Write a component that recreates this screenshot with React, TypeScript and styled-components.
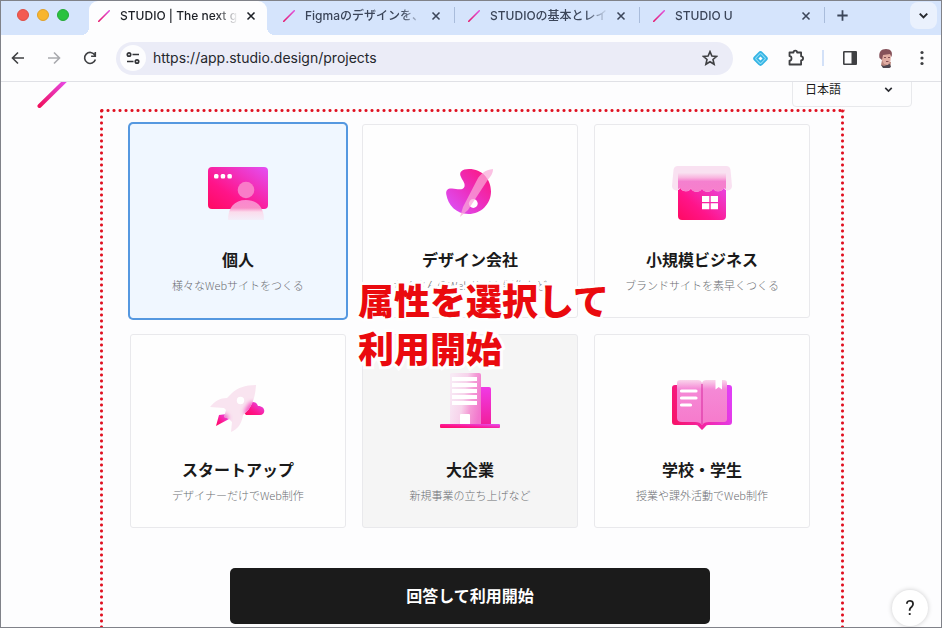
import React, { useState } from "react";
import styled, { createGlobalStyle, css } from "styled-components";

const latin = `Inter, "Noto Sans CJK JP", sans-serif`;
const japanese = `"Noto Sans CJK JP", "Noto Sans", sans-serif`;

const GlobalStyle = createGlobalStyle`
  *, *::before, *::after { box-sizing: border-box; }
  body { margin: 0; background: #fdfdfe; font-family: ${japanese}; color: #1a1a1a; }
  button, input, select { font: inherit; color: inherit; margin: 0; }
  button { padding: 0; border: 0; background: none; cursor: pointer; }
  svg { display: block; }
`;

const Window = styled.div`
  display: flex;
  flex-direction: column;
  height: 100vh;
  border: 1px solid #808289;
  overflow: hidden;
`;

/* ---------- browser chrome ---------- */

const TabStrip = styled.header`
  display: flex;
  flex: none;
  height: 34px;
  background: #d5e4fc;
`;

const WindowButtons = styled.div`
  display: flex;
  flex: none;
  gap: 8px;
  width: 83px;
  padding: 8px 0 0 16px;
`;

const Light = styled.button<{ $color: string; $edge: string }>`
  width: 12px;
  height: 12px;
  border-radius: 50%;
  border: 1px solid ${(p) => p.$edge};
  background: ${(p) => p.$color};
`;

const Tabs = styled.div`
  display: flex;
  flex: 0 1 740px;
  min-width: 0;
`;

const flare = css`
  content: "";
  position: absolute;
  bottom: 0;
  width: 8px;
  height: 8px;
`;

const TabSlot = styled.div<{ $active?: boolean; $divided?: boolean }>`
  position: relative;
  display: flex;
  align-items: center;
  flex: 1 1 185px;
  min-width: 0;
  height: 34px;
  padding: 0 11px 5px 14px;
  color: ${(p) => (p.$active ? "#1d2026" : "#3b4559")};
  background: ${(p) =>
    p.$divided ? "linear-gradient(#a9bcdb, #a9bcdb) 0 6px / 1px 16px no-repeat" : "none"};
  ${(p) =>
    p.$active &&
    css`
      margin: 0 2px 0 5px;
      padding: 0 9px 5px 9px;
      flex-basis: 178px;
      background: #fdfdfe;
      border-radius: 9px 9px 0 0;
      &::before {
        ${flare}
        left: -8px;
        background: radial-gradient(circle at 0 0, transparent 8px, #fdfdfe 8px);
      }
      &::after {
        ${flare}
        right: -8px;
        background: radial-gradient(circle at 100% 0, transparent 8px, #fdfdfe 8px);
      }
    `}
`;

const TabButton = styled.button`
  display: flex;
  align-items: center;
  flex: 1;
  gap: 10px;
  min-width: 0;
  text-align: left;
`;

const TabTitle = styled.span`
  flex: 1;
  overflow: hidden;
  white-space: nowrap;
  font: 500 12px/18px ${latin};
  mask-image: linear-gradient(to right, #000 calc(100% - 28px), transparent calc(100% - 6px));
`;

const IconButton = styled.button<{ $w?: number; $h?: number }>`
  display: grid;
  place-items: center;
  flex: none;
  width: ${(p) => p.$w ?? 24}px;
  height: ${(p) => p.$h ?? 24}px;
`;

const NewTab = styled(IconButton)`
  margin: 2px 0 0 5px;
  color: #3b4559;
`;

const TabSearch = styled(IconButton)`
  margin: 1px 4px 0 auto;
  border-radius: 8px;
  background: #eaf1fd;
`;

const EndDivider = styled.span`
  flex: none;
  width: 1px;
  height: 16px;
  margin-top: 6px;
  background: #a9bcdb;
`;

const Toolbar = styled.nav`
  display: flex;
  align-items: center;
  flex: none;
  height: 47px;
  padding-right: 7px;
  border-bottom: 1px solid #e0e1e6;
  background: #fdfdfe;
  color: #3f4043;
`;

const NavButtons = styled.div`
  display: flex;
  gap: 2px;
  margin-right: 9px;
`;

const AddressBar = styled.div`
  display: flex;
  align-items: center;
  flex: 1;
  min-width: 0;
  height: 33px;
  margin-right: 15px;
  padding: 0 11px 0 4px;
  border-radius: 17px;
  background: #ebecf7;
`;

const SiteInfo = styled(IconButton)`
  border-radius: 50%;
  background: #fdfdfe;
  margin-right: 7px;
`;

const AddressInput = styled.input`
  flex: 1;
  min-width: 0;
  padding: 0;
  border: 0;
  outline: 0;
  background: transparent;
  font: 400 14px/20px ${latin};
  color: #25272c;
`;

const Extensions = styled.div`
  display: flex;
  align-items: center;
  gap: 12px;
`;

const ToolDivider = styled.span`
  width: 2px;
  height: 16px;
  margin: 0 2px;
  background: #d3e1f8;
`;

/* ---------- page ---------- */

const Page = styled.div`
  display: flex;
  flex-direction: column;
  flex: 1;
  min-height: 0;
  background: #fdfdfe;
`;

const PageHeader = styled.div`
  display: flex;
  justify-content: space-between;
  align-items: flex-end;
  flex: none;
  height: 26px;
  padding: 0 29px 0 35px;
  overflow: hidden;
`;

const Language = styled.label`
  position: relative;
  display: flex;
  align-items: center;
  width: 120px;
  height: 36px;
  margin-bottom: 1px;
  border: 1px solid #e8e9ec;
  border-radius: 4px;
`;

const LanguageSelect = styled.select`
  width: 100%;
  height: 34px;
  padding: 0 12px;
  border: 0;
  appearance: none;
  background: transparent;
  font: 400 12px/18px ${japanese};
`;

const SelectArrow = styled.span`
  position: absolute;
  right: 16px;
  top: 11px;
  pointer-events: none;
`;

const Main = styled.main`
  display: flex;
  justify-content: center;
  flex: 1;
  min-height: 0;
  padding-left: 2px;
`;

const dot = "radial-gradient(circle, #e01020 1px, rgba(224, 16, 32, 0) 2px)";

const Survey = styled.form`
  position: relative;
  width: 746px;
  padding: 16px 35px 0 31px;
  background:
    ${dot} 0 0 / 6px 5px repeat-x,
    ${dot} 0 0 / 5px 6px repeat-y,
    ${dot} 100% 0 / 5px 6px repeat-y;
`;

const Choices = styled.fieldset`
  display: grid;
  grid-template-columns: repeat(3, 1fr);
  gap: 16px;
  min-width: 0;
  margin: 0;
  padding: 0;
  border: 0;
`;

const Card = styled.label<{ $selected: boolean; $hovered?: boolean }>`
  display: flex;
  flex-direction: column;
  align-items: center;
  padding: 39px 0 22px;
  border: 1px solid ${(p) => (p.$selected ? "#f0f7ff" : "#e9e9ec")};
  border-radius: 3px;
  background: ${(p) => (p.$selected ? "#f0f7ff" : p.$hovered ? "#f5f5f5" : "#fefefe")};
  box-shadow: ${(p) => (p.$selected ? "0 0 0 2px #5598e0" : "none")};
  cursor: pointer;
`;

const Radio = styled.input`
  position: absolute;
  width: 1px;
  height: 1px;
  opacity: 0;
`;

const CardTitle = styled.span`
  margin-top: 23px;
  font-size: 16px;
  line-height: 24px;
  font-weight: 700;
  white-space: nowrap;
`;

const CardNote = styled.span`
  margin-top: 4px;
  font-size: 11px;
  line-height: 20px;
  font-weight: 300;
  color: #6c6e73;
  white-space: nowrap;
`;

const Submit = styled.button`
  display: block;
  width: 480px;
  max-width: 100%;
  height: 56px;
  margin: 40px auto 0;
  padding-bottom: 2px;
  border-radius: 5px;
  background: #1b1b1b;
  color: #fff;
  font-size: 16px;
  line-height: 24px;
  font-weight: 700;
`;

const Callout = styled.p`
  position: absolute;
  left: 259px;
  top: 167px;
  margin: 0;
  font-size: 36px;
  line-height: 48px;
  font-weight: 900;
  color: #ea0a0e;
  -webkit-text-stroke: 6px #fefefe;
  paint-order: stroke fill;
  pointer-events: none;
`;

const Help = styled.button`
  position: fixed;
  right: 14px;
  bottom: 2px;
  width: 36px;
  height: 36px;
  border-radius: 50%;
  background: #fff;
  box-shadow: 0 0 5px rgba(0, 0, 0, 0.2);
  font: 400 20px/36px Roboto, sans-serif;
  color: #222;
`;

/* ---------- drawings ---------- */

const Slash = ({ size }: { size: number }) => (
  <svg width={size} height={size} viewBox="0 0 12 12">
    <defs>
      <linearGradient id="slash" x1="0" y1="1" x2="1" y2="0">
        <stop offset="0" stopColor="#e6186d" />
        <stop offset="1" stopColor="#e052dd" />
      </linearGradient>
    </defs>
    <path d="M.8 11.3 11.3.8" stroke="url(#slash)" strokeWidth="1.6" strokeLinecap="round" />
  </svg>
);

const PageLogo = () => (
  <svg width="32" height="28" viewBox="0 0 32 28">
    <defs>
      <linearGradient id="logo" x1="0" y1="1" x2="1" y2="0">
        <stop offset="0" stopColor="#f0115e" />
        <stop offset="1" stopColor="#e64df0" />
      </linearGradient>
    </defs>
    <path d="M3.500 26 31-1" stroke="url(#logo)" strokeWidth="4" strokeLinecap="round" />
  </svg>
);

const Stroke = ({ d, size = 16, w = 1.6, color = "currentColor" }: { d: string; size?: number; w?: number; color?: string }) => (
  <svg width={size} height={size} viewBox="0 0 16 16" fill="none" stroke={color} strokeWidth={w}>
    <path d={d} />
  </svg>
);

const Gradients = () => (
  <svg width="0" height="0" aria-hidden="true">
    <defs>
      <linearGradient id="hot" x1="0" y1="1" x2="1" y2="0">
        <stop offset="0" stopColor="#ff0a62" />
        <stop offset="0.35" stopColor="#ff1489" />
        <stop offset="1" stopColor="#e350f5" />
      </linearGradient>
      <linearGradient id="cool" x1="0" y1="1" x2="1" y2="0">
        <stop offset="0" stopColor="#d957ff" />
        <stop offset="0.5" stopColor="#ec2fc0" />
        <stop offset="1" stopColor="#ff1478" />
      </linearGradient>
      <filter id="soft" x="-30%" y="-30%" width="160%" height="160%">
        <feGaussianBlur stdDeviation="2" />
      </filter>
    </defs>
  </svg>
);

const Drawing = ({ children }: { children: React.ReactNode }) => (
  <svg width="60" height="60" viewBox="0 0 60 60" overflow="visible" aria-hidden="true">
    {children}
  </svg>
);

const PersonalIcon = () => (
  <Drawing>
    <defs>
      <linearGradient id="bust" x1="0" y1="0" x2="0" y2="1">
        <stop offset="0" stopColor="#fb86cf" />
        <stop offset="0.4" stopColor="#f98fc9" />
        <stop offset="0.6" stopColor="#fbdcec" />
        <stop offset="1" stopColor="#f3eef9" />
      </linearGradient>
    </defs>
    <rect y="3" width="60" height="42" rx="4" fill="url(#hot)" />
    <g fill="#fff">
      <rect x="6" y="10" width="4.500" height="4.500" rx="1.500" />
      <rect x="12.700" y="10" width="4.500" height="4.500" rx="1.500" />
      <rect x="19.400" y="10" width="4.500" height="4.500" rx="1.500" />
    </g>
    <circle cx="38" cy="26" r="8.300" fill="#f97cc8" />
    <path d="M20 56c0-12 6-20 18-20s18 8 18 20z" fill="url(#bust)" />
  </Drawing>
);

const DesignIcon = () => (
  <Drawing>
    <path
      d="M21 13C18.500 8 22 5 29 5 42 5 51 15 51 27.500S41 50 28.500 50C16 50 8 41 6.300 30.500 5.600 26 8 24.200 12 24.500c6 .8 11.500 2 12.500-2 .8-3.500-1.700-5.500-3.500-9.500z"
      fill="url(#cool)"
    />
    <circle cx="33.300" cy="39.500" r="4.400" fill="#fff" />
    <path d="M53 5c0 5-3 8-6 12L28 46l-8 7 3-10L37 16c3-6 8-10 16-11z" fill="#f9a9d8" opacity=".72" />
  </Drawing>
);

const ShopIcon = () => (
  <Drawing>
    <defs>
      <linearGradient id="awning" x1="0" y1="0" x2="0" y2="1">
        <stop offset="0" stopColor="#f9dff0" />
        <stop offset="0.25" stopColor="#f9b5df" />
        <stop offset="0.45" stopColor="#f480cf" />
        <stop offset="1" stopColor="#f77fcb" />
      </linearGradient>
    </defs>
    <rect x="6" y="14" width="48" height="42" rx="4" fill="url(#hot)" />
    <path
      d="M6 2h48q4 0 4.500 4L60 22a4.500 4.500 0 0 1-8.500 2 6 6 0 0 1-10.500.5 6.300 6.300 0 0 1-11 0 6.300 6.300 0 0 1-11 0A6 6 0 0 1 8.500 24 4.500 4.500 0 0 1 0 22L1.500 6Q2 2 6 2z"
      fill="#f9e1f1"
    />
    <path
      d="M6 9h48v16l-2.500-1a6 6 0 0 1-10.500.5 6.300 6.300 0 0 1-11 0 6.300 6.300 0 0 1-11 0A6 6 0 0 1 8.500 24L6 25z"
      fill="url(#awning)"
    />
    <path d="M30 32h7.300v6H30zM38.700 32H46v6h-7.300zM30 39.300h7.300v6H30zM38.700 39.300H46v6h-7.300z" fill="#fff" />
  </Drawing>
);

const StartupIcon = () => (
  <Drawing>
    <defs>
      <clipPath id="rocketBody">
        <path d="M48 11C37 11 29 14 24 19l-5 5c-7 0-12 3-17 9l14 1 2 2-2 7 5 2 3 3-1 10c7-3 11-9 12-17 8-6 12-15 13-30z" />
      </clipPath>
    </defs>
    <path d="M38 41a5 5 0 0 1 1-8c1-6 9-7 11-1 8 0 8 9 2 9z" fill="url(#hot)" />
    <path d="M8 52l3-11 8-1 2 5z" fill="url(#hot)" />
    <path d="M48 11C37 11 29 14 24 19l-5 5c-7 0-12 3-17 9l14 1 2 2-2 7 5 2 3 3-1 10c7-3 11-9 12-17 8-6 12-15 13-30z" fill="#f9e4f0" />
    <g clipPath="url(#rocketBody)">
      <path d="M38 41a5 5 0 0 1 1-8c1-6 9-7 11-1 8 0 8 9 2 9z" fill="#f45cc5" filter="url(#soft)" />
      <path d="M8 52l3-11 8-1 2 5z" fill="#ee68c6" filter="url(#soft)" />
    </g>
    <circle cx="32.500" cy="26.500" r="3.700" fill="#fff" />
  </Drawing>
);

const EnterpriseIcon = () => (
  <Drawing>
    <defs>
      <linearGradient id="tower" x1="0" y1="0.300" x2="1" y2="0.600">
        <stop offset="0" stopColor="#f8eaf5" />
        <stop offset="0.450" stopColor="#f7d3eb" />
        <stop offset="0.700" stopColor="#f49bd6" />
        <stop offset="1" stopColor="#f276cd" />
      </linearGradient>
      <linearGradient id="block" x1="0" y1="1" x2="0" y2="0">
        <stop offset="0" stopColor="#f11f9a" />
        <stop offset="1" stopColor="#f03ae6" />
      </linearGradient>
    </defs>
    <path d="M30 13h19q2 0 2 2v36H30z" fill="url(#block)" />
    <rect y="50" width="60" height="4" rx="1" fill="url(#hot)" />
    <path d="M10 1q0-2 2-2h27q2 0 2 2v49H10z" fill="url(#tower)" />
    <path d="M20 41q0-1 1-1h8q1 0 1 1v9H20zM12 3h25v4H12zM12 9h25v4H12zM12 15h25v4H12zM12 21h25v4H12zM12 27h25v4H12z" fill="#fff" />
  </Drawing>
);

const SchoolIcon = () => (
  <Drawing>
    <defs>
      <linearGradient id="paper" x1="0" y1="0" x2="0" y2="1">
        <stop offset="0" stopColor="#fad6ec" />
        <stop offset="0.200" stopColor="#f589d6" />
        <stop offset="1" stopColor="#f67acb" />
      </linearGradient>
      <linearGradient id="cover" x1="0" y1="0.600" x2="1" y2="0.400">
        <stop offset="0" stopColor="#f7146b" />
        <stop offset="0.500" stopColor="#f327ab" />
        <stop offset="1" stopColor="#e03ff5" />
      </linearGradient>
    </defs>
    <path d="M3 11h54q3 0 3 3v34q0 3-3 3H36q-2 0-3 2l-3 3-3-3q-1-2-3-2H3q-3 0-3-3V14q0-3 3-3z" fill="url(#cover)" />
    <path d="M5 9q0-3 3-3h18q3 0 4 3 1-3 4-3h18q3 0 3 3v36q0 3-3 3H37q-5 0-7 3-2-3-7-3H10q-5 0-5-4z" fill="url(#paper)" />
    <path d="M30 10v40" stroke="#d929a0" />
    <path d="M9.500 17h14.500M9.500 24h14.500M9.500 31h9" stroke="#fff" strokeWidth="3.200" strokeLinecap="round" />
    <path d="M43.500 6h6.500v9.500L46.700 13l-3.200 2.500z" fill="#fff" />
  </Drawing>
);

const Avatar = () => (
  <svg width="16" height="20" viewBox="0 0 16 20">
    <path d="M4 12 3 17l3 3h6l1-6z" fill="#b9857c" />
    <path d="M3 17l3 1 6-2 1 3-2 1H5z" fill="#4c4650" />
    <path d="M3 6q5-4 10 0l-.5 7-3 4L6 16l-2-4z" fill="#e0aca3" />
    <path d="M1.500 10C.5 4 3 1 8 1s7 3 5.500 8L12 6 5 7l-1 5z" fill="#85515a" />
    <path d="M6 9.500h2m2 0h2M8 13.500h2.500" stroke="#77434b" strokeWidth=".9" />
  </svg>
);

const closePath = "M4 4l8 8M12 4l-8 8";
const chevronPath = "M4 6l4 4 4-4";

/* ---------- data ---------- */

const tabs = [
  { title: "STUDIO | The next g", active: true },
  { title: "Figmaのデザインを、" },
  { title: "STUDIOの基本とレイ", divided: true },
  { title: "STUDIO U", divided: true },
];

const options = [
  { id: "personal", title: "個人", note: "様々なWebサイトをつくる", Icon: PersonalIcon },
  { id: "design", title: "デザイン会社", note: "たくさんのWebサイト制作など", Icon: DesignIcon },
  { id: "small", title: "小規模ビジネス", note: "ブランドサイトを素早くつくる", Icon: ShopIcon },
  { id: "startup", title: "スタートアップ", note: "デザイナーだけでWeb制作", Icon: StartupIcon },
  { id: "enterprise", title: "大企業", note: "新規事業の立ち上げなど", Icon: EnterpriseIcon, hovered: true },
  { id: "school", title: "学校・学生", note: "授業や課外活動でWeb制作", Icon: SchoolIcon },
];

export default function App() {
  const [selected, setSelected] = useState("personal");
  return (
    <Window>
      <GlobalStyle />
      <TabStrip>
        <WindowButtons>
          <Light aria-label="Close" $color="#f35b51" $edge="#dd4e46" />
          <Light aria-label="Minimize" $color="#f8b52e" $edge="#dfa02a" />
          <Light aria-label="Zoom" $color="#2bc23f" $edge="#25a937" />
        </WindowButtons>
        <Tabs>
          {tabs.map((t) => (
            <TabSlot key={t.title} $active={t.active} $divided={t.divided}>
              <TabButton>
                <Slash size={12} />
                <TabTitle>{t.title}</TabTitle>
              </TabButton>
              <IconButton $w={14} $h={16} aria-label="Close tab">
                <Stroke d={closePath} size={14} w={1.8} />
              </IconButton>
            </TabSlot>
          ))}
        </Tabs>
        <EndDivider />
        <NewTab aria-label="New tab">
          <Stroke d="M8 2.500v11M2.500 8h11" size={15} w={1.9} />
        </NewTab>
        <TabSearch $w={27} $h={27} aria-label="Search tabs">
          <Stroke d={chevronPath} size={15} w={2.1} color="#26282d" />
        </TabSearch>
      </TabStrip>

      <Toolbar>
        <NavButtons>
          <IconButton $w={34} $h={34} aria-label="Back">
            <Stroke d="M14 8H3M8 2.500 2.500 8 8 13.500" />
          </IconButton>
          <IconButton $w={34} $h={34} aria-label="Forward">
            <Stroke d="M2 8h11M8 2.500 13.500 8 8 13.500" color="#a9aaae" />
          </IconButton>
          <IconButton $w={34} $h={34} aria-label="Reload">
            <Stroke d="M12.800 5A5.500 5.500 0 1 0 13.400 9.500M13.300 2v4.200H9.100" />
          </IconButton>
        </NavButtons>
        <AddressBar>
          <SiteInfo $w={26} $h={26} aria-label="Site information">
            <svg width="14" height="14" viewBox="0 0 14 14" fill="none" stroke="#333438" strokeWidth="1.700">
              <circle cx="3" cy="3.500" r="1.700" />
              <path d="M6.500 3.500H13M1 10.500h6.500" />
              <circle cx="11" cy="10.500" r="1.700" />
            </svg>
          </SiteInfo>
          <AddressInput aria-label="Address" defaultValue="https://app.studio.design/projects" />
          <IconButton aria-label="Bookmark">
            <Stroke d="M8 1.600 9.900 6l4.700.4L11 9.500l1.100 4.700L8 11.700l-4.100 2.500L5 9.500 1.400 6.400 6.100 6z" size={16} w={1.6} />
          </IconButton>
        </AddressBar>
        <Extensions>
          <IconButton aria-label="Extension">
            <svg width="17" height="17" viewBox="0 0 17 17">
              <rect x="2.500" y="2.500" width="12" height="12" rx="3" transform="rotate(45 8.500 8.500)" fill="#35b4e4" />
              <rect x="4.800" y="4.800" width="7.400" height="7.400" rx="1" transform="rotate(45 8.500 8.500)" fill="none" stroke="#8fdcf5" />
              <rect x="7" y="7" width="3" height="3" transform="rotate(45 8.500 8.500)" fill="#fff" />
            </svg>
          </IconButton>
          <IconButton aria-label="Extensions">
            <svg width="18" height="18" viewBox="0 0 18 18" fill="none" stroke="currentColor" strokeWidth="1.800" strokeLinejoin="round">
              <path d="M2.500 3.500H6.500q0-1.800 1.800-1.800t1.800 1.800h4V7.300q2 0 2 2t-2 2v4.200H2.500v-3.800q2 0 2-2.300t-2-2.300z" />
            </svg>
          </IconButton>
          <ToolDivider />
          <IconButton aria-label="Side panel">
            <svg width="16" height="16" viewBox="0 0 16 16">
              <rect x="1.800" y="1.800" width="12.400" height="12.400" rx="0.500" fill="none" stroke="currentColor" strokeWidth="1.600" />
              <path d="M9.500 1.500h5v13h-5z" fill="currentColor" />
            </svg>
          </IconButton>
          <IconButton aria-label="Profile">
            <Avatar />
          </IconButton>
          <IconButton aria-label="Menu">
            <svg width="4" height="16" viewBox="0 0 4 16" fill="currentColor">
              <circle cx="2" cy="2.500" r="1.600" />
              <circle cx="2" cy="8" r="1.600" />
              <circle cx="2" cy="13.500" r="1.600" />
            </svg>
          </IconButton>
        </Extensions>
      </Toolbar>

      <Page>
        <PageHeader>
          <PageLogo />
          <Language>
            <LanguageSelect aria-label="言語">
              <option>日本語</option>
              <option>English</option>
            </LanguageSelect>
            <SelectArrow>
              <Stroke d={chevronPath} size={13} w={2} color="#2d2e33" />
            </SelectArrow>
          </Language>
        </PageHeader>
        <Main>
          <Survey onSubmit={(e) => e.preventDefault()}>
            <Gradients />
            <Choices>
              {options.map(({ id, title, note, Icon, hovered }) => (
                <Card key={id} $selected={selected === id} $hovered={hovered}>
                  <Radio
                    type="radio"
                    name="attribute"
                    value={id}
                    checked={selected === id}
                    onChange={() => setSelected(id)}
                  />
                  <Icon />
                  <CardTitle>{title}</CardTitle>
                  <CardNote>{note}</CardNote>
                </Card>
              ))}
            </Choices>
            <Submit type="submit">回答して利用開始</Submit>
            <Callout>
              属性を選択して
              <br />
              利用開始
            </Callout>
          </Survey>
        </Main>
      </Page>
      <Help aria-label="ヘルプ">?</Help>
    </Window>
  );
}
